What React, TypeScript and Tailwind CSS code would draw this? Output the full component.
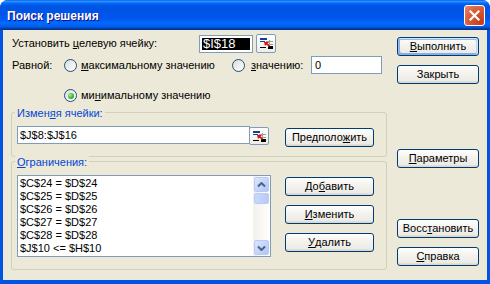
import React from 'react';

const U = ({ children }: { children: React.ReactNode }) => (
  <span className="underline underline-offset-[1px] decoration-1">{children}</span>
);

const Btn = ({
  children,
  className = '',
  def = false,
}: {
  children: React.ReactNode;
  className?: string;
  def?: boolean;
}) => (
  <div
    className={
      'flex items-center justify-center h-[19px] rounded-[3px] border border-[#003C74] bg-[linear-gradient(180deg,#ffffff_0%,#f4f3ee_40%,#ecebe6_85%,#d6d0c5_100%)] text-black ' +
      (def
        ? 'shadow-[inset_-1px_1px_#cee7ff,inset_1px_2px_#98b8ea,inset_-2px_2px_#bcd4f6,inset_1px_-1px_#89ade4,inset_2px_-2px_#89ade4] '
        : '') +
      className
    }
  >
    {children}
  </div>
);

const Radio = ({ checked = false }: { checked?: boolean }) => (
  <div className="w-[13px] h-[13px] shrink-0 rounded-full border border-[#1C5180] bg-[linear-gradient(135deg,#dcdcd7_0%,#ffffff_100%)] flex items-center justify-center">
    {checked && (
      <div className="w-[6px] h-[6px] rounded-full bg-[radial-gradient(circle_at_35%_35%,#a4f3a1_0%,#3fb93c_50%,#1f8e1c_100%)]" />
    )}
  </div>
);

const RefBtn = ({ className = '' }: { className?: string }) => (
  <div
    className={
      'w-[20px] shrink-0 rounded-[2px] border border-[#7F9DB9] bg-[linear-gradient(180deg,#ffffff_0%,#eeede5_100%)] flex items-center justify-center ' +
      className
    }
  >
    <svg width="15" height="13" viewBox="0 0 15 13">
      <line x1="7" y1="4.5" x2="14" y2="4.5" stroke="#9a9a9a" />
      <line x1="7" y1="7.5" x2="14" y2="7.5" stroke="#9a9a9a" />
      <line x1="10.5" y1="3" x2="10.5" y2="12" stroke="#9a9a9a" />
      <rect x="1" y="1" width="7" height="2" fill="#1A3B9C" />
      <rect x="1" y="4" width="5" height="1" fill="#1A3B9C" />
      <rect x="1" y="10" width="6" height="1" fill="#000" />
      <rect x="9" y="9" width="5" height="3" fill="#000" />
      <polygon points="5,5 10,5 8.6,6.4 11,8.8 9.8,10 7.4,7.6 6,9" fill="#E01010" />
    </svg>
  </div>
);

const Caret = ({ down = false }: { down?: boolean }) => (
  <svg width="9" height="6" viewBox="0 0 9 6">
    <polyline
      points={down ? '1,1.5 4.5,5 8,1.5' : '1,4.5 4.5,1 8,4.5'}
      fill="none"
      stroke="#4D6185"
      strokeWidth="2"
    />
  </svg>
);

const ScrollBtn = ({ children }: { children?: React.ReactNode }) => (
  <div className="h-[17px] p-[1px]">
    <div className="h-full rounded-[2px] border border-[#B8CBF6] bg-[linear-gradient(135deg,#dbe5ff_0%,#c6d5fc_50%,#b0c6f7_100%)] flex items-center justify-center">
      {children}
    </div>
  </div>
);

const constraints = [
  '$C$24 = $D$24',
  '$C$25 = $D$25',
  '$C$26 = $D$26',
  '$C$27 = $D$27',
  '$C$28 = $D$28',
  '$J$10 <= $H$10',
];

export default function App() {
  return (
    <div className="w-[490px] h-[284px] flex flex-col rounded-t-[8px] overflow-hidden bg-[#0054E3] font-['Liberation_Sans',Arial,sans-serif] text-[11px] text-black">
      {/* title bar */}
      <div className="h-[30px] shrink-0 flex items-center justify-between pl-[7px] pr-[5px] bg-[linear-gradient(180deg,#0058ee_0%,#3593ff_4%,#288eff_6%,#127dff_8%,#036ffc_10%,#0262ee_14%,#0057e5_20%,#0054e3_24%,#0055eb_56%,#005bf5_66%,#026afe_76%,#0062ef_86%,#0052d6_92%,#0040ab_94%,#003092_100%)]">
        <span className="text-white font-bold text-[12px] [text-shadow:1px_1px_#0f1089] pt-[1px]">
          Поиск решения
        </span>
        <div className="w-[21px] h-[21px] rounded-[3px] border border-white bg-[radial-gradient(circle_at_85%_85%,#c33d17_0%,#da5a35_55%,#e9876b_100%)] flex items-center justify-center">
          <svg width="11" height="11" viewBox="0 0 11 11">
            <path d="M1.5 1.5 L9.5 9.5 M9.5 1.5 L1.5 9.5" stroke="#fff" strokeWidth="2.2" strokeLinecap="square" />
          </svg>
        </div>
      </div>

      {/* body */}
      <div className="flex-1 mx-[3px] mb-[4px] bg-[#ECE9D8] flex pl-[8px]">
        {/* left column */}
        <div className="w-[376px] flex flex-col">
          <div className="mt-[4px] h-[19px] flex items-center">
            <div className="w-[188px] pl-[1px]">
              Установить <U>ц</U>елевую ячейку:
            </div>
            <div className="w-[54px] h-[18px] border border-[#7F9DB9] bg-white p-[2px] flex">
              <div className="flex-1 bg-black text-white text-[13px] leading-[12px] pl-[1px]">$I$18</div>
            </div>
            <RefBtn className="h-[19px] ml-[3px]" />
          </div>

          <div className="mt-[3px] h-[18px] flex items-center">
            <div className="w-[53px] pl-[1px]">Равной:</div>
            <div className="w-[168px] flex items-center">
              <Radio />
              <span className="ml-[4px]">
                <U>м</U>аксимальному значению
              </span>
            </div>
            <div className="w-[79px] flex items-center">
              <Radio />
              <span className="ml-[6px]">
                <U>з</U>начению:
              </span>
            </div>
            <div className="w-[71px] h-[18px] border border-[#7F9DB9] bg-white pl-[3px] flex items-center">0</div>
          </div>

          <div className="mt-[15px] h-[13px] pl-[53px] flex items-center">
            <Radio checked />
            <span className="ml-[4px]">
              ми<U>н</U>имальному значению
            </span>
          </div>

          {/* group 1 */}
          <div className="relative mt-[10px] h-[45px] border border-[#D0D0BF] rounded-[3px] flex items-start pl-[5px] pt-[13px]">
            <span className="absolute -top-[8px] left-[3px] px-[2px] bg-[#ECE9D8] text-[#0046D5]">
              Измен<U>я</U>я ячейки:
            </span>
            <div className="w-[233px] h-[18px] border border-[#7F9DB9] bg-white pl-[2px] flex items-center">$J$8:$J$16</div>
            <RefBtn className="h-[18px] -ml-[1px] mt-[1px]" />
            <Btn className="w-[89px] ml-[16px] mt-[2px]">
              Предполо<U>ж</U>ить
            </Btn>
          </div>

          {/* group 2 */}
          <div className="relative mt-[4px] h-[109px] border border-[#D0D0BF] rounded-[3px] flex items-start pl-[5px] pt-[13px]">
            <span className="absolute -top-[8px] left-[3px] px-[2px] bg-[#ECE9D8] text-[#0046D5]">
              <U>О</U>граничения:
            </span>
            <div className="w-[254px] h-[82px] border border-[#7F9DB9] bg-white flex">
              <div className="flex-1 pl-[2px] pt-[1px] leading-[13px]">
                {constraints.map((c) => (
                  <div key={c}>{c}</div>
                ))}
              </div>
              <div className="w-[17px] flex flex-col bg-[linear-gradient(90deg,#f3f1ec_0%,#fefefb_100%)]">
                <ScrollBtn>
                  <Caret />
                </ScrollBtn>
                <div className="h-[11px] px-[1px]">
                  <div className="h-full rounded-[2px] border border-[#B8CBF6] bg-[linear-gradient(90deg,#c9d8fc_0%,#b8cbf7_100%)]" />
                </div>
                <div className="flex-1" />
                <ScrollBtn>
                  <Caret down />
                </ScrollBtn>
              </div>
            </div>
            <div className="ml-[14px] mt-[2px] flex flex-col gap-[9px]">
              <Btn className="w-[89px]">
                До<U>б</U>авить
              </Btn>
              <Btn className="w-[89px]">
                <U>И</U>зменить
              </Btn>
              <Btn className="w-[89px]">
                <U>У</U>далить
              </Btn>
            </div>
          </div>
        </div>

        {/* right column */}
        <div className="ml-[10px] w-[82px] flex flex-col">
          <Btn def className="mt-[7px]">
            <U>В</U>ыполнить
          </Btn>
          <Btn className="mt-[9px]">Закрыть</Btn>
          <Btn className="mt-[65px]">
            <U>П</U>араметры
          </Btn>
          <Btn className="mt-[51px]">
            Восс<U>т</U>ановить
          </Btn>
          <Btn className="mt-[9px]">
            <U>С</U>правка
          </Btn>
        </div>
      </div>
    </div>
  );
}
